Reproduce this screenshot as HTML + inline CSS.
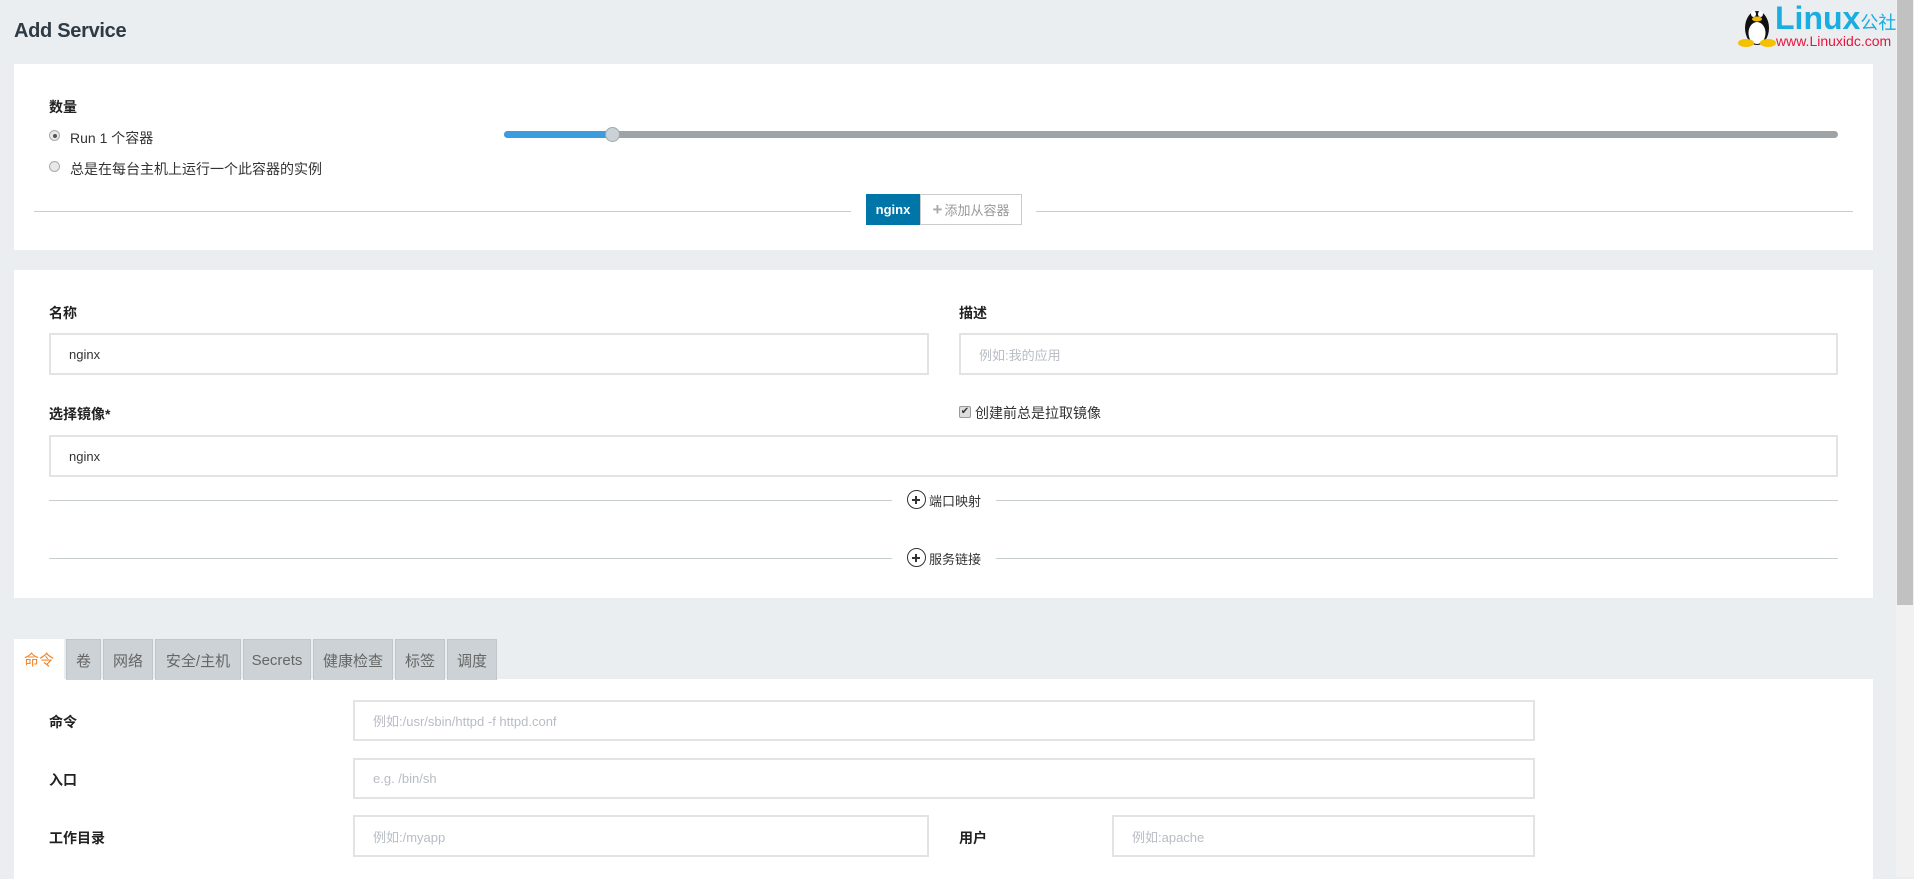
<!DOCTYPE html>
<html><head><meta charset="utf-8"><style>
*{box-sizing:border-box;margin:0;padding:0}
body{width:1914px;height:877px;overflow:hidden;background:#ebeef0;font-family:"Liberation Sans","Noto Sans CJK SC",sans-serif;color:#333;position:relative;font-size:14px}
.a{position:absolute}
.card{position:absolute;background:#fff}
.lbl{position:absolute;font-weight:bold;font-size:14px;color:#222}
.inp{position:absolute;border:2px solid #e3e3e3;background:#fff;font-size:13px;color:#333;padding-left:18px;display:flex;align-items:center}
.ph{color:#b8bcc4}
.line{position:absolute;height:1px;background:#c8cdd0}
.tab{position:absolute;top:639px;height:41px;background:#ccd2d5;border:1px solid #c0c6ca;border-bottom:none;color:#666;font-size:15px;display:flex;align-items:center;justify-content:center}
.radio{position:absolute;width:11px;height:11px;border-radius:50%;border:1px solid #aaa;background:#e8e8e8}
.plus{position:absolute;width:19px;height:19px;border:1.5px solid #333;border-radius:50%}
.plus:before{content:"";position:absolute;left:4px;top:8px;width:8px;height:1.5px;background:#333}
.plus:after{content:"";position:absolute;left:7.3px;top:4.5px;width:1.5px;height:8px;background:#333}
</style></head><body>
<div class="a" style="left:14px;top:20px;font-size:20px;font-weight:bold;color:#2e3a44;letter-spacing:-0.3px">Add Service</div>

<!-- logo -->
<svg class="a" style="left:1738px;top:2px" width="38" height="46" viewBox="0 0 38 46">
<ellipse cx="19" cy="26" rx="12" ry="17" fill="#111"/>
<ellipse cx="19" cy="31" rx="8.5" ry="11" fill="#fff"/>
<ellipse cx="15.5" cy="12" rx="2.5" ry="3" fill="#fff"/><ellipse cx="22.5" cy="12" rx="2.5" ry="3" fill="#fff"/>
<ellipse cx="19" cy="17" rx="5" ry="2.5" fill="#f5b800"/>
<ellipse cx="8" cy="41" rx="8" ry="4" fill="#f5c000"/><ellipse cx="30" cy="41" rx="8" ry="4" fill="#f5c000"/>
</svg>
<div class="a" style="left:1775px;top:1px;font-size:32px;font-weight:bold;color:#19ade2;line-height:34px">Linux<span style="font-size:18px;font-weight:normal">公社</span></div>
<div class="a" style="left:1776px;top:33px;font-size:14px;color:#e8143c;line-height:16px">www.Linuxidc.com</div>

<!-- scrollbar -->
<div class="a" style="left:1896px;top:0;width:18px;height:877px;background:#f1f1f1"></div>
<div class="a" style="left:1897px;top:0;width:16px;height:605px;background:#c1c1c1"></div>

<!-- card 1 -->
<div class="card" style="left:14px;top:64px;width:1859px;height:186px"></div>
<div class="lbl" style="left:49px;top:97px">数量</div>
<div class="radio" style="left:49px;top:130px"></div><div class="a" style="left:52.5px;top:133.5px;width:4px;height:4px;border-radius:50%;background:#555"></div>
<div class="a" style="left:70px;top:128px;font-size:14px">Run 1 个容器</div>
<div class="radio" style="left:49px;top:161px"></div>
<div class="a" style="left:70px;top:159px;font-size:14px">总是在每台主机上运行一个此容器的实例</div>
<div class="a" style="left:504px;top:131px;width:1334px;height:7px;border-radius:4px;background:#9ea3a8"></div>
<div class="a" style="left:504px;top:131px;width:110px;height:7px;border-radius:4px;background:#3b9ddd"></div>
<div class="a" style="left:605px;top:127px;width:15px;height:15px;border-radius:50%;background:#ccd1d5;border:1px solid #9aa"></div>
<div class="line" style="left:34px;top:211px;width:817px"></div>
<div class="line" style="left:1036px;top:211px;width:817px"></div>
<div class="a" style="left:866px;top:194px;width:54px;height:31px;background:#0075a8;color:#fff;font-weight:bold;font-size:13px;display:flex;align-items:center;justify-content:center">nginx</div>
<div class="a" style="left:920px;top:194px;width:102px;height:31px;border:1px solid #ccc;color:#999;font-size:13px;display:flex;align-items:center;justify-content:center"><b style="font-size:17px;color:#aaa;margin-right:2px">+</b>添加从容器</div>

<!-- card 2 -->
<div class="card" style="left:14px;top:270px;width:1859px;height:328px"></div>
<div class="lbl" style="left:49px;top:303px">名称</div>
<div class="inp" style="left:49px;top:333px;width:880px;height:42px">nginx</div>
<div class="lbl" style="left:959px;top:303px">描述</div>
<div class="inp" style="left:959px;top:333px;width:879px;height:42px"><span class="ph">例如:我的应用</span></div>
<div class="lbl" style="left:49px;top:404px">选择镜像*</div>
<div class="a" style="left:959px;top:406px;width:12px;height:12px;border:1px solid #999;border-radius:2px;background:#ddd;font-size:10px;line-height:10px;text-align:center">✔</div>
<div class="a" style="left:975px;top:403px;font-size:14px">创建前总是拉取镜像</div>
<div class="inp" style="left:49px;top:435px;width:1789px;height:42px">nginx</div>
<div class="line" style="left:49px;top:500px;width:843px"></div>
<div class="line" style="left:996px;top:500px;width:842px"></div>
<div class="plus" style="left:907px;top:490px"></div>
<div class="a" style="left:929px;top:491px;font-size:13px">端口映射</div>
<div class="line" style="left:49px;top:558px;width:843px"></div>
<div class="line" style="left:996px;top:558px;width:842px"></div>
<div class="plus" style="left:907px;top:548px"></div>
<div class="a" style="left:929px;top:549px;font-size:13px">服务链接</div>

<!-- tabs -->
<div class="card" style="left:14px;top:679px;width:1859px;height:200px"></div>
<div class="tab" style="left:14px;width:50px;background:#fff;border:none;color:#f0862c;height:41px">命令</div>
<div class="tab" style="left:66px;width:35px">卷</div>
<div class="tab" style="left:103px;width:50px">网络</div>
<div class="tab" style="left:155px;width:86px">安全/主机</div>
<div class="tab" style="left:243px;width:68px">Secrets</div>
<div class="tab" style="left:313px;width:80px">健康检查</div>
<div class="tab" style="left:395px;width:50px">标签</div>
<div class="tab" style="left:447px;width:50px">调度</div>

<div class="lbl" style="left:49px;top:712px">命令</div>
<div class="inp" style="left:353px;top:700px;width:1182px;height:41px"><span class="ph">例如:/usr/sbin/httpd -f httpd.conf</span></div>
<div class="lbl" style="left:49px;top:770px">入口</div>
<div class="inp" style="left:353px;top:758px;width:1182px;height:41px"><span class="ph">e.g. /bin/sh</span></div>
<div class="lbl" style="left:49px;top:828px">工作目录</div>
<div class="inp" style="left:353px;top:815px;width:576px;height:42px"><span class="ph">例如:/myapp</span></div>
<div class="lbl" style="left:959px;top:828px">用户</div>
<div class="inp" style="left:1112px;top:815px;width:423px;height:42px"><span class="ph">例如:apache</span></div>
</body></html>
